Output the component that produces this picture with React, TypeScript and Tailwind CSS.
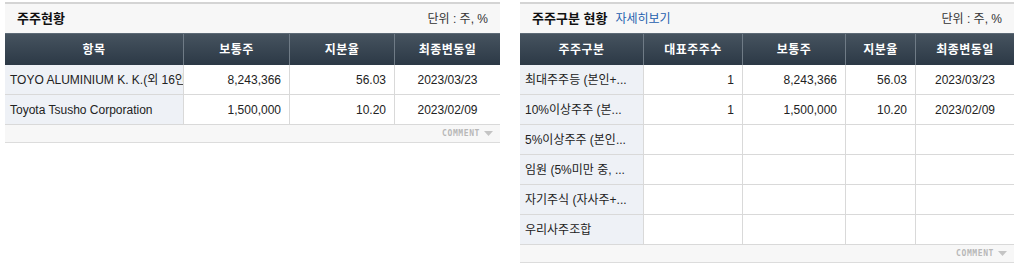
import React from "react";

const font = { fontFamily: '"Liberation Sans", "Noto Sans CJK KR", sans-serif' };

type Col = { label: string; w: string; align: "left" | "right" | "center" };

function Comment() {
  return (
    <div className="h-[18px] bg-[#f7f7f7] border-b border-[#dcdcdc] flex items-center justify-end pr-[7px] gap-[4px]">
      <span className="text-[8px] leading-none tracking-[0.6px] text-[#b8b8b8] font-bold" style={{ fontFamily: '"DejaVu Sans Mono", monospace' }}>
        COMMENT
      </span>
      <svg width="9" height="6" viewBox="0 0 9 6">
        <path d="M0 0 H9 L4.5 5 Z" fill="#c4c4c4" />
      </svg>
    </div>
  );
}

function Table({ cols, rows }: { cols: Col[]; rows: string[][] }) {
  return (
    <div>
      <div className="flex h-[32px] bg-gradient-to-b from-[#46535f] to-[#2c3946] border-t border-[#5d6a76]">
        {cols.map((c, i) => (
          <div
            key={i}
            className={`${c.w} flex items-center justify-center text-white font-bold text-[12px] tracking-[0.5px] ${i > 0 ? "border-l border-[#6f7b86]" : ""}`}
          >
            {c.label}
          </div>
        ))}
      </div>
      {rows.map((r, ri) => (
        <div key={ri} className="flex h-[30px] border-b border-[#d9d9d9]">
          {r.map((cell, ci) => (
            <div
              key={ci}
              className={`${cols[ci].w} flex items-center overflow-hidden whitespace-nowrap text-[12px] text-[#222] ${
                ci === 0 ? "bg-[#eef1f6] pl-[5px]" : "bg-white border-l border-[#d9d9d9]"
              } ${cols[ci].align === "right" ? "justify-end pr-[8px]" : cols[ci].align === "center" ? "justify-center" : ""}`}
            >
              {cell}
            </div>
          ))}
        </div>
      ))}
    </div>
  );
}

export default function App() {
  const leftCols: Col[] = [
    { label: "항목", w: "w-[178px]", align: "left" },
    { label: "보통주", w: "w-[106px]", align: "right" },
    { label: "지분율", w: "w-[105px]", align: "right" },
    { label: "최종변동일", w: "w-[106px]", align: "center" },
  ];
  const rightCols: Col[] = [
    { label: "주주구분", w: "w-[123px]", align: "left" },
    { label: "대표주주수", w: "w-[99px]", align: "right" },
    { label: "보통주", w: "w-[103px]", align: "right" },
    { label: "지분율", w: "w-[70px]", align: "right" },
    { label: "최종변동일", w: "w-[99px]", align: "center" },
  ];
  return (
    <div className="bg-white w-[1025px] h-[269px] pt-[2px] pl-[5px] flex gap-[20px]" style={font}>
      <div className="w-[495px]">
        <div className="border-t-2 border-[#d4d4d4] h-[31px] bg-[#f7f7f7] flex items-center justify-between pl-[12px] pr-[12px]">
          <span className="font-bold text-[13px] text-[#111]">주주현황</span>
          <span className="text-[12px] text-[#333]">단위 : 주, %</span>
        </div>
        <Table
          cols={leftCols}
          rows={[
            ["TOYO ALUMINIUM K. K.(외 16인)", "8,243,366", "56.03", "2023/03/23"],
            ["Toyota Tsusho Corporation", "1,500,000", "10.20", "2023/02/09"],
          ]}
        />
        <Comment />
      </div>
      <div className="w-[494px]">
        <div className="border-t-2 border-[#d4d4d4] h-[31px] bg-[#f7f7f7] flex items-center justify-between pl-[12px] pr-[12px]">
          <div className="flex items-center gap-[8px]">
            <span className="font-bold text-[13px] text-[#111]">주주구분 현황</span>
            <span className="text-[12px] text-[#1d5fae]">자세히보기</span>
          </div>
          <span className="text-[12px] text-[#333]">단위 : 주, %</span>
        </div>
        <Table
          cols={rightCols}
          rows={[
            ["최대주주등 (본인+...", "1", "8,243,366", "56.03", "2023/03/23"],
            ["10%이상주주 (본...", "1", "1,500,000", "10.20", "2023/02/09"],
            ["5%이상주주 (본인...", "", "", "", ""],
            ["임원 (5%미만 중, ...", "", "", "", ""],
            ["자기주식 (자사주+...", "", "", "", ""],
            ["우리사주조합", "", "", "", ""],
          ]}
        />
        <Comment />
      </div>
    </div>
  );
}
